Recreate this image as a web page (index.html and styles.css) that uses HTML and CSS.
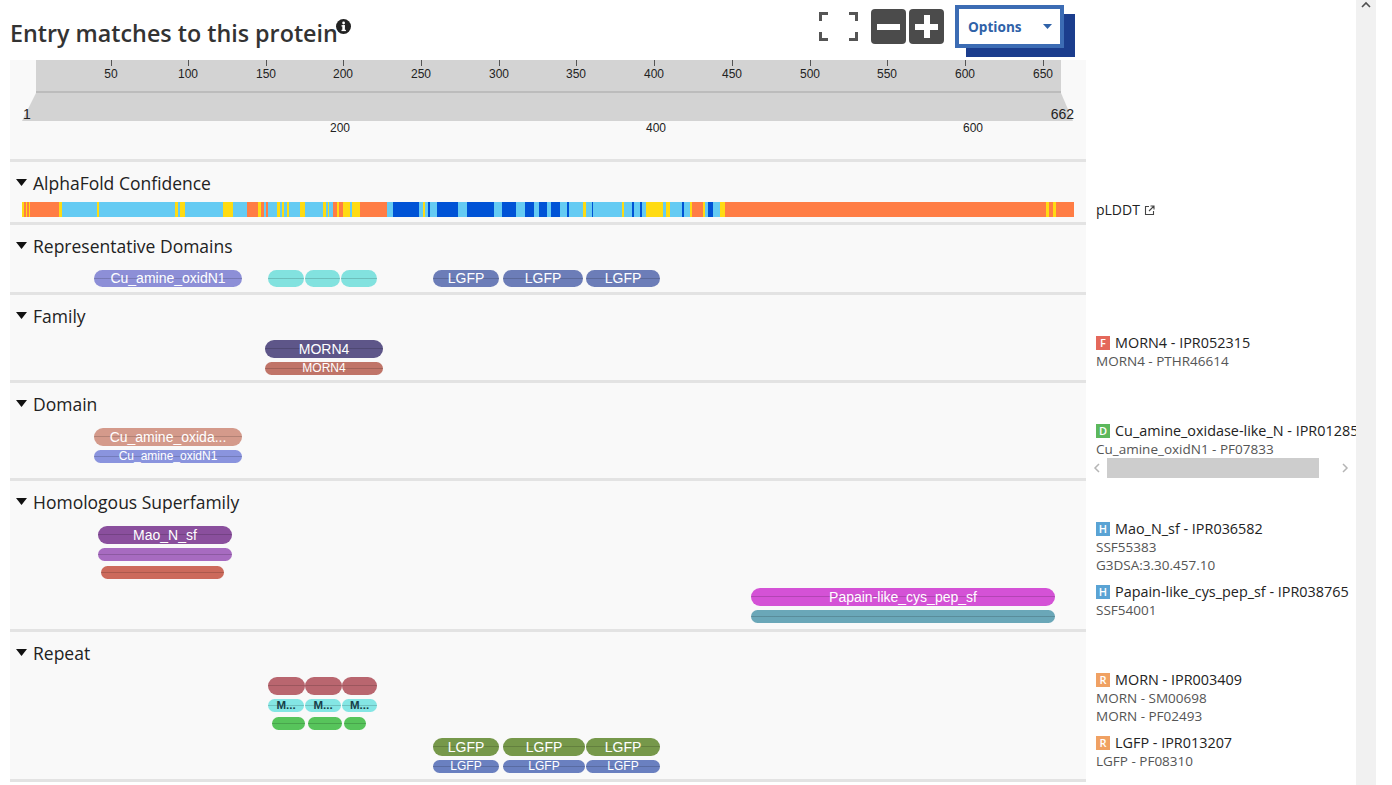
FILE: index.html
```html
<!DOCTYPE html>
<html>
<head>
<meta charset="utf-8">
<title>Entry matches to this protein</title>
<link rel="stylesheet" href="styles.css">
</head>
<body>
<div class="page">
  <div class="main">
    <header class="head">
      <h2 class="title">Entry matches to this protein<svg class="info" width="15" height="15" viewBox="0 0 15 15"><circle cx="7.5" cy="7.5" r="7.5" fill="#222"/><rect x="6.3" y="6.2" width="2.6" height="5.8" fill="#fff"/><rect x="5.5" y="6.2" width="3.4" height="1.3" fill="#fff"/><rect x="5.5" y="10.8" width="4.4" height="1.3" fill="#fff"/><circle cx="7.6" cy="4" r="1.4" fill="#fff"/></svg></h2>
      <div class="tools">
        <svg class="fs" width="39" height="29" viewBox="0 0 39 29"><path d="M1.5 9V1.5H9M30 1.5H37.5V9M37.5 20V27.5H30M9 27.5H1.5V20" fill="none" stroke="#555" stroke-width="3"/></svg>
        <div class="zbtn"><span class="bar-h"></span></div>
        <div class="zbtn plus"><span class="bar-h"></span><span class="bar-v"></span></div>
        <div class="options"><span>Options</span><svg class="caret-o" width="9" height="5" viewBox="0 0 9 5"><path d="M0 0H9L4.5 5Z" fill="#2f62a8"/></svg></div>
      </div>
    </header>

    <div class="viewer">
      <!-- ruler -->
      <div class="sec ruler">
        <svg width="1076" height="99" viewBox="0 0 1076 99">
          <rect x="26" y="0" width="1025" height="31" fill="#d3d3d3"/>
          <rect x="26" y="31" width="1025" height="2" fill="#bcbcbc"/>
          <polygon points="26,33 1051,33 1063,61 12,61" fill="#d3d3d3"/>
          <g stroke="#555" stroke-width="1">
            <line x1="101.5" y1="0" x2="101.5" y2="6"/><line x1="178.5" y1="0" x2="178.5" y2="6"/><line x1="256.5" y1="0" x2="256.5" y2="6"/><line x1="333.5" y1="0" x2="333.5" y2="6"/><line x1="411.5" y1="0" x2="411.5" y2="6"/><line x1="489.5" y1="0" x2="489.5" y2="6"/><line x1="566.5" y1="0" x2="566.5" y2="6"/><line x1="644.5" y1="0" x2="644.5" y2="6"/><line x1="722.5" y1="0" x2="722.5" y2="6"/><line x1="800.5" y1="0" x2="800.5" y2="6"/><line x1="877.5" y1="0" x2="877.5" y2="6"/><line x1="955.5" y1="0" x2="955.5" y2="6"/><line x1="1033.5" y1="0" x2="1033.5" y2="6"/>
          </g>
          <g class="rtxt" text-anchor="middle">
            <text x="101" y="18">50</text><text x="178" y="18">100</text><text x="256" y="18">150</text><text x="333" y="18">200</text><text x="411" y="18">250</text><text x="489" y="18">300</text><text x="566" y="18">350</text><text x="644" y="18">400</text><text x="722" y="18">450</text><text x="800" y="18">500</text><text x="877" y="18">550</text><text x="955" y="18">600</text><text x="1033" y="18">650</text>
          </g>
          <text class="rbig" x="13" y="59">1</text>
          <text class="rbig" x="1064" y="59" text-anchor="end">662</text>
          <g class="rtxt" text-anchor="middle">
            <text x="330" y="72">200</text><text x="646" y="72">400</text><text x="963" y="72">600</text>
          </g>
        </svg>
      </div>
      <div class="lab"></div>

      <!-- AlphaFold -->
      <div class="sec">
        <div class="sec-head"><svg class="caret" width="11" height="7" viewBox="0 0 11 7"><path d="M0 0H11L5.5 7Z"/></svg><span>AlphaFold Confidence</span></div>
        <svg class="af" width="1052" height="15" viewBox="0 0 1052 15" shape-rendering="crispEdges">
          <rect x="0" y="0" width="1052" height="15" fill="#65cbf3"/>
          <g fill="#ffdb13">
            <rect x="0" width="2" height="15"/><rect x="4" width="1" height="15"/><rect x="7" width="1" height="15"/><rect x="37" width="3" height="15"/><rect x="75" width="2" height="15"/><rect x="153" width="3" height="15"/><rect x="158" width="5" height="15"/><rect x="201" width="10" height="15"/><rect x="236" width="3" height="15"/><rect x="255" width="3" height="15"/><rect x="260" width="2" height="15"/><rect x="265" width="2" height="15"/><rect x="278" width="5" height="15"/><rect x="301" width="3" height="15"/><rect x="306" width="1" height="15"/><rect x="315" width="2" height="15"/><rect x="321" width="7" height="15"/><rect x="330" width="8" height="15"/><rect x="401" width="2" height="15"/><rect x="561" width="3" height="15"/><rect x="600" width="2" height="15"/><rect x="624" width="17" height="15"/><rect x="644" width="4" height="15"/><rect x="668" width="2" height="15"/><rect x="681" width="2" height="15"/><rect x="698" width="5" height="15"/><rect x="1024" width="3" height="15"/><rect x="1031" width="3" height="15"/>
          </g>
          <g fill="#ff7d45">
            <rect x="2" width="2" height="15"/><rect x="5" width="2" height="15"/><rect x="8" width="29" height="15"/><rect x="225" width="11" height="15"/><rect x="239" width="3" height="15"/><rect x="244" width="2" height="15"/><rect x="311" width="4" height="15"/><rect x="317" width="4" height="15"/><rect x="338" width="27" height="15"/><rect x="670" width="11" height="15"/><rect x="703" width="321" height="15"/><rect x="1027" width="4" height="15"/><rect x="1034" width="18" height="15"/>
          </g>
          <g fill="#0053d6">
            <rect x="371" width="26" height="15"/><rect x="406" width="2" height="15"/><rect x="415" width="21" height="15"/><rect x="445" width="27" height="15"/><rect x="480" width="14" height="15"/><rect x="503" width="9" height="15"/><rect x="517" width="8" height="15"/><rect x="529" width="9" height="15"/><rect x="545" width="2" height="15"/><rect x="570" width="1" height="15"/><rect x="610" width="2" height="15"/><rect x="618" width="2" height="15"/><rect x="660" width="2" height="15"/><rect x="686" width="5" height="15"/>
          </g>
        </svg>
      </div>
      <div class="lab">
        <div class="l1 plddt">pLDDT<svg width="11" height="11" viewBox="0 0 11 11"><path d="M5 1.5H1.5V9.5H9.5V6M6.5 1H10V4.5M10 1L5 6" fill="none" stroke="#444" stroke-width="1.1"/></svg></div>
      </div>

      <!-- Representative Domains -->
      <div class="sec">
        <div class="sec-head"><svg class="caret" width="11" height="7" viewBox="0 0 11 7"><path d="M0 0H11L5.5 7Z"/></svg><span>Representative Domains</span></div>
        <div class="rows">
          <div class="row">
            <div class="pill rd c-lav" style="left:84px;width:148px">Cu_amine_oxidN1</div>
            <div class="pill rd c-cyan" style="left:258px;width:36px"></div>
            <div class="pill rd c-cyan" style="left:295px;width:35px"></div>
            <div class="pill rd c-cyan" style="left:331px;width:36px"></div>
            <div class="pill rd c-slate" style="left:423px;width:66px">LGFP</div>
            <div class="pill rd c-slate" style="left:493px;width:80px">LGFP</div>
            <div class="pill rd c-slate" style="left:576px;width:74px">LGFP</div>
          </div>
        </div>
      </div>
      <div class="lab"></div>

      <!-- Family -->
      <div class="sec">
        <div class="sec-head"><svg class="caret" width="11" height="7" viewBox="0 0 11 7"><path d="M0 0H11L5.5 7Z"/></svg><span>Family</span></div>
        <div class="rows">
          <div class="group">
            <div class="row"><div class="pill c-morn" style="left:255px;width:118px">MORN4</div></div>
            <div class="row s"><div class="pill sm c-brick" style="left:255px;width:118px">MORN4</div></div>
          </div>
        </div>
      </div>
      <div class="lab">
        <div class="lgroup">
          <div class="l1"><span class="badge b-f">F</span>MORN4 - IPR052315</div>
          <div class="l2">MORN4 - PTHR46614</div>
        </div>
      </div>

      <!-- Domain -->
      <div class="sec">
        <div class="sec-head"><svg class="caret" width="11" height="7" viewBox="0 0 11 7"><path d="M0 0H11L5.5 7Z"/></svg><span>Domain</span></div>
        <div class="rows">
          <div class="group">
            <div class="row"><div class="pill c-salmon" style="left:84px;width:148px">Cu_amine_oxida...</div></div>
            <div class="row s"><div class="pill sm c-lav2" style="left:84px;width:148px">Cu_amine_oxidN1</div></div>
          </div>
        </div>
      </div>
      <div class="lab">
        <div class="lgroup">
          <div class="l1"><span class="badge b-d">D</span>Cu_amine_oxidase-like_N - IPR012854</div>
          <div class="l2">Cu_amine_oxidN1 - PF07833</div>
          <div class="hscroll">
            <svg class="chev" width="17" height="20" viewBox="0 0 17 20"><path d="M9 6L5 10L9 14" fill="none" stroke="#b5b5b5" stroke-width="1.5"/></svg>
            <div class="thumb"></div>
            <svg class="chev right" width="17" height="20" viewBox="0 0 17 20"><path d="M7 6L11 10L7 14" fill="none" stroke="#b5b5b5" stroke-width="1.5"/></svg>
          </div>
        </div>
      </div>

      <!-- Homologous Superfamily -->
      <div class="sec pb1">
        <div class="sec-head"><svg class="caret" width="11" height="7" viewBox="0 0 11 7"><path d="M0 0H11L5.5 7Z"/></svg><span>Homologous Superfamily</span></div>
        <div class="rows">
          <div class="group">
            <div class="row"><div class="pill c-plum" style="left:88px;width:134px">Mao_N_sf</div></div>
            <div class="row s"><div class="pill sm c-orchid" style="left:88px;width:134px"></div></div>
            <div class="row s"><div class="pill sm c-rust" style="left:91px;width:123px"></div></div>
          </div>
          <div class="group">
            <div class="row"><div class="pill c-magenta" style="left:741px;width:304px">Papain-like_cys_pep_sf</div></div>
            <div class="row s"><div class="pill sm c-teal" style="left:741px;width:304px"></div></div>
          </div>
        </div>
      </div>
      <div class="lab">
        <div class="lgroup">
          <div class="l1"><span class="badge b-h">H</span>Mao_N_sf - IPR036582</div>
          <div class="l2">SSF55383</div>
          <div class="l2">G3DSA:3.30.457.10</div>
        </div>
        <div class="lgroup">
          <div class="l1"><span class="badge b-h">H</span>Papain-like_cys_pep_sf - IPR038765</div>
          <div class="l2">SSF54001</div>
        </div>
      </div>

      <!-- Repeat -->
      <div class="sec pb1">
        <div class="sec-head"><svg class="caret" width="11" height="7" viewBox="0 0 11 7"><path d="M0 0H11L5.5 7Z"/></svg><span>Repeat</span></div>
        <div class="rows">
          <div class="group">
            <div class="row">
              <div class="pill c-rose" style="left:258px;width:37px"></div>
              <div class="pill c-rose" style="left:295px;width:37px"></div>
              <div class="pill c-rose" style="left:332px;width:35px"></div>
            </div>
            <div class="row s">
              <div class="pill sm dark c-cyan2" style="left:258px;width:36px">M...</div>
              <div class="pill sm dark c-cyan2" style="left:295px;width:36px">M...</div>
              <div class="pill sm dark c-cyan2" style="left:332px;width:35px">M...</div>
            </div>
            <div class="row s">
              <div class="pill sm c-green" style="left:262px;width:33px"></div>
              <div class="pill sm c-green" style="left:298px;width:34px"></div>
              <div class="pill sm c-green" style="left:334px;width:22px"></div>
            </div>
          </div>
          <div class="group g3">
            <div class="row">
              <div class="pill c-olive" style="left:423px;width:66px">LGFP</div>
              <div class="pill c-olive" style="left:493px;width:82px">LGFP</div>
              <div class="pill c-olive" style="left:576px;width:74px">LGFP</div>
            </div>
            <div class="row s">
              <div class="pill sm c-blue" style="left:423px;width:66px">LGFP</div>
              <div class="pill sm c-blue" style="left:493px;width:82px">LGFP</div>
              <div class="pill sm c-blue" style="left:576px;width:74px">LGFP</div>
            </div>
          </div>
        </div>
      </div>
      <div class="lab">
        <div class="lgroup">
          <div class="l1"><span class="badge b-r">R</span>MORN - IPR003409</div>
          <div class="l2">MORN - SM00698</div>
          <div class="l2">MORN - PF02493</div>
        </div>
        <div class="lgroup">
          <div class="l1"><span class="badge b-r">R</span>LGFP - IPR013207</div>
          <div class="l2">LGFP - PF08310</div>
        </div>
      </div>
    </div>
  </div>
  <div class="vscroll"><svg width="10" height="7" viewBox="0 0 10 7"><path d="M1 6L5 2L9 6" fill="none" stroke="#505050" stroke-width="1.6"/></svg></div>
</div>
</body>
</html>
```

FILE: styles.css
```css
* { box-sizing: border-box; }
html, body { margin: 0; padding: 0; background: #fff; }
body { font-family: "Open Sans", "Noto Sans", sans-serif; color: #333; }

.page { display: flex; width: 1392px; height: 785px; overflow: hidden; }
.main { width: 1356px; flex: none; padding-left: 10px; overflow: hidden; }
.vscroll { width: 20px; flex: none; height: 785px; background: #f1f1f1; display: flex; justify-content: center; padding-top: 1px; }
.vscroll svg { display: block; }

/* header */
.head { display: flex; justify-content: space-between; align-items: flex-start; width: 1076px; height: 60px; }
.title { margin: 0; padding-top: 17px; font-size: 23.3px; line-height: 32px; font-weight: 600; color: #333; white-space: nowrap; }
.info { display: inline-block; vertical-align: 8px; margin-left: -2px; }
.tools { display: flex; align-items: center; height: 43px; margin-top: 5px; margin-right: 22px; }
.fs { display: block; margin-right: 13px; }
.zbtn { width: 35px; height: 35px; background: #4b4b4b; border-radius: 4px; display: flex; align-items: center; justify-content: center; position: relative; }
.zbtn.plus { margin-left: 3px; }
.bar-h { display: block; width: 23px; height: 6px; background: #fff; }
.plus .bar-v { position: absolute; width: 6px; height: 23px; background: #fff; left: 14.5px; top: 6px; }
.options { margin-left: 11px; width: 109px; height: 43px; border: 4px solid #3c6cb4; background: #fff; box-shadow: 11px 9px 0 #1b3d8d; display: flex; align-items: center; padding: 0 8px 0 9px; font-size: 13.6px; font-weight: 700; color: #2f62a8; }
.caret-o { margin-left: auto; display: block; }

/* viewer grid */
.viewer { display: grid; grid-template-columns: 1076px 270px; }
.sec { background: #f9f9f9; border-bottom: 3px solid #e3e3e3; }
.sec.pb1 { padding-bottom: 1px; }
.ruler { height: 102px; }
.ruler svg { display: block; }
.rtxt { font-family: "Liberation Sans", Arial, sans-serif; font-size: 12px; fill: #222; }
.rbig { font-family: "Liberation Sans", Arial, sans-serif; font-size: 14px; fill: #222; }

.sec-head { height: 40px; display: flex; align-items: center; gap: 6px; padding-left: 6px; padding-top: 1px; font-size: 17.5px; color: #222; }
.caret { display: block; fill: #111; }
.af { display: block; margin-left: 12px; margin-bottom: 5px; }

.rows { margin-top: 5px; }
.group + .group { margin-top: 4px; }
.group.g3 { margin-top: 3px; }
.row { position: relative; height: 22px; }
.row.s { height: 18px; }

.pill { position: absolute; top: 0; height: 18px; border-radius: 9px; color: #fff; text-align: center; white-space: nowrap; overflow: hidden;
  font-family: "Liberation Sans", Arial, sans-serif; font-size: 14px; line-height: 18px;
  background-color: var(--c);
  background-image: linear-gradient(to bottom, transparent calc(50% - 0.5px), rgba(0,0,0,0.16) calc(50% - 0.5px), rgba(0,0,0,0.16) calc(50% + 0.5px), transparent calc(50% + 0.5px)); }
.pill.rd { height: 17px; line-height: 17px; border-radius: 8.5px; }
.pill.sm { height: 13px; line-height: 13px; border-radius: 6.5px; font-size: 12px; }
.pill.dark { color: #173e48; font-weight: 700; font-size: 11.5px; }

.c-lav { --c: #8d8fd7; }
.c-cyan { --c: #82e2df; }
.c-slate { --c: #6c7db8; }
.c-morn { --c: #5e5689; }
.c-brick { --c: #c07468; }
.c-salmon { --c: #d49a8b; }
.c-lav2 { --c: #8a94de; }
.c-plum { --c: #8a4f9d; }
.c-orchid { --c: #a76bc0; }
.c-rust { --c: #cc6a5b; }
.c-magenta { --c: #d452d6; }
.c-teal { --c: #6aa7b8; }
.c-rose { --c: #b9666f; }
.c-cyan2 { --c: #84e6e4; }
.c-green { --c: #57c45b; }
.c-olive { --c: #76984a; }
.c-blue { --c: #6a80c0; }

/* labels */
.lab { padding: 39px 0 3px 10px; overflow: hidden; white-space: nowrap; font-size: 14.4px; line-height: 18px; color: #222; }
.lgroup + .lgroup { margin-top: 9px; }
.l1 { display: flex; align-items: center; gap: 5px; height: 18px; }
.plddt { gap: 4px; font-size: 14px; }
.plddt svg { display: block; }
.l2 { font-size: 13.5px; color: #555; height: 18px; }
.badge { flex: none; width: 14px; height: 14px; color: #fff; font-size: 11px; line-height: 14px; text-align: center; font-weight: 600; }
.b-f { background: #e4685b; }
.b-d { background: #5cb85c; }
.b-h { background: #5aa3d4; }
.b-r { background: #f0a163; }

.hscroll { display: flex; align-items: center; height: 20px; width: 266px; margin-left: -6px; }
.chev { display: block; flex: none; }
.thumb { width: 212px; height: 20px; background: #cdcdcd; }
.chev.right { margin-left: auto; margin-right: 3px; }
```
